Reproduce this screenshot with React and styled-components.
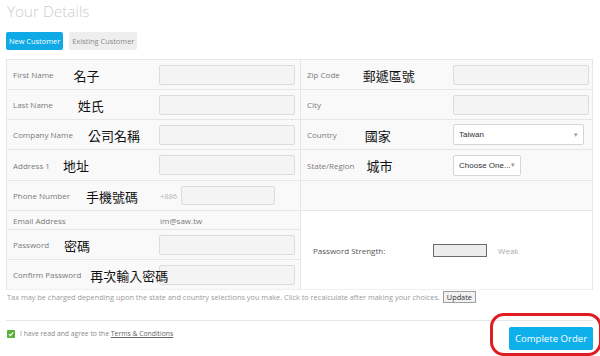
import React from "react";
import styled, { createGlobalStyle } from "styled-components";

const GlobalStyle = createGlobalStyle`
  body {
    margin: 0;
    background: #fff;
    font-family: "Open Sans", "Noto Sans", sans-serif;
  }
`;

const leftRows = [
  { label: "First Name", note: "名子", gap: 20, h: 30, kind: "input" },
  { label: "Last Name", note: "姓氏", gap: 25, h: 30, kind: "input" },
  { label: "Company Name", note: "公司名稱", gap: 15, h: 30, kind: "input" },
  { label: "Address 1", note: "地址", gap: 13, h: 31, kind: "input" },
  { label: "Phone Number", note: "手機號碼", gap: 16, h: 30, kind: "phone" },
  { label: "Email Address", h: 19, kind: "email" },
  { label: "Password", note: "密碼", gap: 15, h: 30, kind: "input" },
  { label: "Confirm Password", note: "再次輸入密碼", gap: 9, h: 30, kind: "input" },
];

const rightRows = [
  { label: "Zip Code", note: "郵遞區號", gap: 23, h: 30, kind: "input" },
  { label: "City", h: 30, kind: "input" },
  { label: "Country", note: "國家", gap: 28, h: 30, kind: "country" },
  { label: "State/Region", note: "城市", gap: 12, h: 31, kind: "state" },
  { label: "", h: 30, kind: "empty" },
];

const Check = () => (
  <svg width="6" height="6" viewBox="0 0 10 10">
    <path d="M1.5 5.2 L4 7.6 L8.6 2.4" fill="none" stroke="#fff" strokeWidth="2" />
  </svg>
);

const Field = ({ row }) => {
  if (row.kind === "input") return <TextBox />;
  if (row.kind === "phone")
    return (
      <>
        <Prefix>+886</Prefix>
        <TextBox $w={94} $h={19} />
      </>
    );
  if (row.kind === "email") return <Static>im@saw.tw</Static>;
  if (row.kind === "country")
    return (
      <Select $w={131}>
        Taiwan<Caret>▾</Caret>
      </Select>
    );
  if (row.kind === "state")
    return (
      <Select $w={68}>
        Choose One...<Caret>▾</Caret>
      </Select>
    );
  return null;
};

const FormRow = ({ row, last }) => (
  <Row $h={row.h} $last={last}>
    {row.label && (
      <LabelCell>
        <Label>{row.label}</Label>
        {row.note && <Note $gap={row.gap}>{row.note}</Note>}
      </LabelCell>
    )}
    <Field row={row} />
  </Row>
);

export default function App() {
  return (
    <>
      <GlobalStyle />
      <Page>
        <Title>Your Details</Title>
        <Tabs>
          <Tab $active>New Customer</Tab>
          <Tab>Existing Customer</Tab>
        </Tabs>
        <Table>
          <LeftCol>
            {leftRows.map((r, i) => (
              <FormRow key={r.label} row={r} last={i === leftRows.length - 1} />
            ))}
          </LeftCol>
          <RightCol>
            {rightRows.map((r, i) => (
              <FormRow key={i} row={r} />
            ))}
            <Strength>
              <StrengthLabel>Password Strength:</StrengthLabel>
              <Meter />
              <Weak>Weak</Weak>
            </Strength>
          </RightCol>
        </Table>
        <TaxLine>
          Tax may be charged depending upon the state and country selections you make. Click to
          recalculate after making your choices.
          <UpdateBtn>Update</UpdateBtn>
        </TaxLine>
        <Footer>
          <Agree>
            <Box>
              <Check />
            </Box>
            I have read and agree to the <TermsLink>Terms &amp; Conditions</TermsLink>
          </Agree>
          <OrderBtn>Complete Order</OrderBtn>
        </Footer>
        <Ring />
      </Page>
    </>
  );
}

const Page = styled.div`
  position: relative;
  width: 587px;
  height: 356px;
  padding: 0 7px 0 6px;
  overflow: hidden;
`;

const Title = styled.h1`
  margin: 0;
  padding-left: 1px;
  font-size: 15.3px;
  font-weight: 300;
  line-height: 22px;
  color: #cdcdcd;
`;

const Tabs = styled.div`
  display: flex;
  gap: 6px;
  margin-top: 10px;
`;

const Tab = styled.div`
  height: 18px;
  padding: 0 3px;
  display: flex;
  align-items: center;
  border-radius: 2px;
  font-size: 7.4px;
  color: ${(p) => (p.$active ? "#fff" : "#8a8a8a")};
  background: ${(p) => (p.$active ? "#0fa9e6" : "#eeeeee")};
`;

const Table = styled.div`
  display: flex;
  margin-top: 9px;
  border: 1px solid #e6e6e6;
  border-bottom: none;
  background: #f9f9f9;
`;

const LeftCol = styled.div`
  flex: none;
  width: 293px;
  display: flex;
  flex-direction: column;
  border-right: 1px solid #e6e6e6;
`;

const RightCol = styled.div`
  flex: 1;
  display: flex;
  flex-direction: column;
`;

const Row = styled.div`
  box-sizing: border-box;
  height: ${(p) => p.$h}px;
  display: flex;
  align-items: center;
  padding-left: 6px;
  border-bottom: 1px solid ${(p) => (p.$last ? "#f0f0f0" : "#e6e6e6")};
`;

const LabelCell = styled.div`
  flex: none;
  width: 146px;
  display: flex;
  align-items: center;
`;

const Label = styled.span`
  font-size: 8px;
  color: #7a7a7a;
  white-space: nowrap;
`;

const Note = styled.span`
  margin-left: ${(p) => p.$gap}px;
  font-family: "Noto Sans CJK TC", "Noto Sans CJK SC", sans-serif;
  font-size: 13px;
  line-height: 14px;
  color: #111;
  white-space: nowrap;
  position: relative;
  top: 1px;
`;

const TextBox = styled.div`
  box-sizing: border-box;
  width: ${(p) => p.$w || 136}px;
  height: ${(p) => p.$h || 20}px;
  background: #f4f4f4;
  border: 1px solid #dcdcdc;
  border-radius: 2px;
`;

const Prefix = styled.span`
  margin: 0 4px 0 1px;
  font-size: 7.5px;
  color: #b5b5b5;
`;

const Static = styled.span`
  margin-left: 1px;
  font-size: 8px;
  color: #7a7a7a;
`;

const Select = styled.div`
  box-sizing: border-box;
  width: ${(p) => p.$w}px;
  height: 21px;
  display: flex;
  align-items: center;
  justify-content: space-between;
  padding: 0 5px;
  background: #fff;
  border: 1px solid #d6d6d6;
  border-radius: 2px;
  font-family: "Liberation Sans", Arial, sans-serif;
  font-size: 8px;
  color: #333;
`;

const Caret = styled.span`
  font-size: 7px;
  color: #999;
`;

const Strength = styled.div`
  flex: 1;
  display: flex;
  align-items: center;
  padding-left: 12px;
  background: #fff;
  border-bottom: 1px solid #f0f0f0;
`;

const StrengthLabel = styled.span`
  width: 120px;
  font-size: 8px;
  color: #555;
`;

const Meter = styled.div`
  box-sizing: border-box;
  width: 54px;
  height: 13px;
  background: #ececec;
  border: 1px solid #6a6a6a;
`;

const Weak = styled.span`
  margin-left: 11px;
  font-size: 8px;
  color: #aaa;
`;

const TaxLine = styled.div`
  display: flex;
  align-items: center;
  height: 13px;
  padding-left: 1px;
  font-size: 7.35px;
  color: #9a9a9a;
  white-space: nowrap;
`;

const UpdateBtn = styled.span`
  margin-left: 3px;
  padding: 0 3px;
  height: 12px;
  line-height: 11px;
  box-sizing: border-box;
  border: 1px solid #9e9e9e;
  background: #f1f1f1;
  font-size: 7.3px;
  color: #333;
`;

const Footer = styled.div`
  display: flex;
  justify-content: space-between;
  align-items: flex-start;
  margin-top: 17px;
  border-top: 1px solid #e6e6e6;
`;

const Agree = styled.div`
  display: flex;
  align-items: center;
  margin-top: 8px;
  padding-left: 1px;
  font-size: 6.8px;
  color: #8a8a8a;
  white-space: pre;
`;

const Box = styled.span`
  width: 8px;
  height: 8px;
  margin-right: 5px;
  display: flex;
  align-items: center;
  justify-content: center;
  border-radius: 1px;
  background: #5cb03a;
`;

const TermsLink = styled.span`
  color: #666;
  text-decoration: underline;
`;

const OrderBtn = styled.div`
  margin-top: 6px;
  width: 84px;
  height: 23px;
  display: flex;
  align-items: center;
  justify-content: center;
  border-radius: 2px;
  background: #0db0ea;
  font-size: 9.6px;
  color: #fff;
`;

const Ring = styled.div`
  position: absolute;
  left: 490px;
  top: 313px;
  width: 112px;
  height: 43px;
  box-sizing: border-box;
  border: 3px solid #e11b22;
  border-radius: 14px;
`;
